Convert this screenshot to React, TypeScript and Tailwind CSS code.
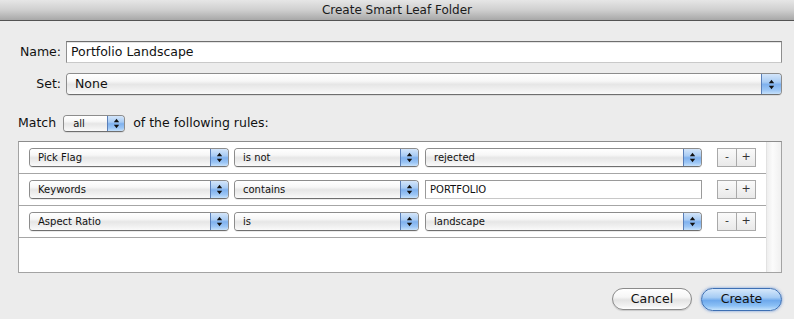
import React from "react";

const FONT = { fontFamily: '"DejaVu Sans", "Liberation Sans", sans-serif' };

function Arrows() {
  return (
    <svg width="7" height="11" viewBox="0 0 7 11" className="block">
      <polygon points="0.8,4.2 3.5,0.8 6.2,4.2" fill="#111" />
      <polygon points="0.8,6.8 3.5,10.2 6.2,6.8" fill="#111" />
    </svg>
  );
}

function Popup({
  text,
  className,
  textClass = "text-[10px]",
  stepW = "w-[18px]",
  pl = "pl-[8px]",
}: {
  text: string;
  className: string;
  textClass?: string;
  stepW?: string;
  pl?: string;
}) {
  return (
    <div
      className={`flex items-stretch rounded-[4px] border border-[#8c8c8c] border-b-[#6f6f6f] overflow-hidden shadow-[0_1px_0_rgba(0,0,0,0.08)] ${className}`}
    >
      <div
        className={`flex-1 flex items-center ${pl} ${textClass} text-[#111] bg-[linear-gradient(to_bottom,#ffffff_0%,#f7f7f7_35%,#e6e6e6_52%,#efefef_75%,#fafafa_100%)]`}
      >
        {text}
      </div>
      <div
        className={`${stepW} flex items-center justify-center border-l border-[#5a7fb8] bg-[linear-gradient(to_bottom,#d3e5fa_0%,#a9ccf4_40%,#7fb1ee_52%,#9cc6f5_80%,#c6e1fb_100%)]`}
      >
        <Arrows />
      </div>
    </div>
  );
}

function PlusMinus() {
  return (
    <div className="flex h-[19px] text-[11px] text-[#333]">
      <div className="w-[20px] flex items-center justify-center border border-[#a9a9a9] bg-[linear-gradient(to_bottom,#fafafa,#e9e9e9)]">
        -
      </div>
      <div className="w-[20px] -ml-px flex items-center justify-center border border-[#a9a9a9] bg-[linear-gradient(to_bottom,#fafafa,#e9e9e9)]">
        +
      </div>
    </div>
  );
}

function Row({ children }: { children: React.ReactNode }) {
  return (
    <div className="h-[32px] border-b border-[#a6a6a6] flex items-center pl-[10px]">
      {children}
    </div>
  );
}

export default function App() {
  return (
    <div style={FONT} className="w-[794px] h-[319px] bg-[#ececec] flex flex-col overflow-hidden">
      {/* title bar */}
      <div className="h-[21px] border-b border-[#545454] bg-[linear-gradient(to_bottom,#e6e6e6_0%,#cfcfcf_50%,#a8a8a8_100%)] flex items-center justify-center text-[12px] text-[#1a1a1a]">
        Create Smart Leaf Folder
      </div>

      {/* Name */}
      <div className="mt-[20px] flex items-center h-[22px]">
        <div className="w-[61px] text-right text-[12.5px] text-[#111]">Name:</div>
        <div className="ml-[5px] w-[716px] h-[22px] bg-white border border-[#8e8e8e] border-t-[#6e6e6e] border-b-[#c9c9c9] flex items-center pl-[4px] text-[12.5px] text-[#111] shadow-[inset_0_1px_0_#e4e4e4]">
          Portfolio Landscape
        </div>
      </div>

      {/* Set */}
      <div className="mt-[10px] flex items-center h-[22px]">
        <div className="w-[61px] text-right text-[12.5px] text-[#111]">Set:</div>
        <Popup
          text="None"
          className="ml-[5px] w-[716px] h-[22px]"
          textClass="text-[12.5px]"
          stepW="w-[20px]"
        />
      </div>

      {/* Match */}
      <div className="mt-[18px] flex items-center h-[20px] pl-[18px] text-[12.5px] text-[#111]">
        <span>Match</span>
        <Popup
          text="all"
          className="ml-[7px] w-[62px] h-[17px]"
          textClass="text-[10px]"
          stepW="w-[17px]"
          pl="pl-[9px]"
        />
        <span className="ml-[8px]">of the following rules:</span>
      </div>

      {/* rules list */}
      <div className="mt-[8px] ml-[18px] w-[764px] h-[132px] bg-white border border-[#a3a3a3] border-t-[#8c8c8c] flex">
        <div className="flex-1 flex flex-col">
          <Row>
            <Popup text="Pick Flag" className="w-[200px] h-[19px]" />
            <Popup text="is not" className="ml-[5px] w-[185px] h-[19px]" />
            <Popup text="rejected" className="ml-[6px] w-[277px] h-[19px]" />
            <div className="ml-[15px]">
              <PlusMinus />
            </div>
          </Row>
          <Row>
            <Popup text="Keywords" className="w-[200px] h-[19px]" />
            <Popup text="contains" className="ml-[5px] w-[185px] h-[19px]" />
            <div className="ml-[6px] w-[277px] h-[19px] bg-white border border-[#9a9a9a] border-b-[#c8c8c8] flex items-center pl-[4px] text-[10px] text-[#111]">
              PORTFOLIO
            </div>
            <div className="ml-[15px]">
              <PlusMinus />
            </div>
          </Row>
          <Row>
            <Popup text="Aspect Ratio" className="w-[200px] h-[19px]" />
            <Popup text="is" className="ml-[5px] w-[185px] h-[19px]" />
            <Popup text="landscape" className="ml-[6px] w-[277px] h-[19px]" />
            <div className="ml-[15px]">
              <PlusMinus />
            </div>
          </Row>
        </div>
        <div className="w-[15px] border-l border-[#e2e2e2] bg-[linear-gradient(to_right,#eeeeee,#fbfbfb_40%,#f0f0f0_100%)]" />
      </div>

      {/* buttons */}
      <div className="mt-[14px] flex justify-end pr-[12px] items-center h-[24px]">
        <div className="w-[80px] h-[22px] rounded-full border border-[#8a8a8a] bg-[linear-gradient(to_bottom,#ffffff_0%,#f6f6f6_40%,#e3e3e3_55%,#f2f2f2_85%,#ffffff_100%)] flex items-center justify-center text-[12.5px] text-[#111] shadow-[0_1px_1px_rgba(0,0,0,0.15)]">
          Cancel
        </div>
        <div className="ml-[9px] w-[81px] h-[23px] rounded-full border border-[#3d6fb3] bg-[linear-gradient(to_bottom,#d6e8fb_0%,#a6ccf4_40%,#6ea9ec_55%,#8cc0f5_80%,#c5e3fc_100%)] flex items-center justify-center text-[12.5px] text-[#111] shadow-[0_0_3px_rgba(60,120,210,0.7)]">
          Create
        </div>
      </div>
    </div>
  );
}
